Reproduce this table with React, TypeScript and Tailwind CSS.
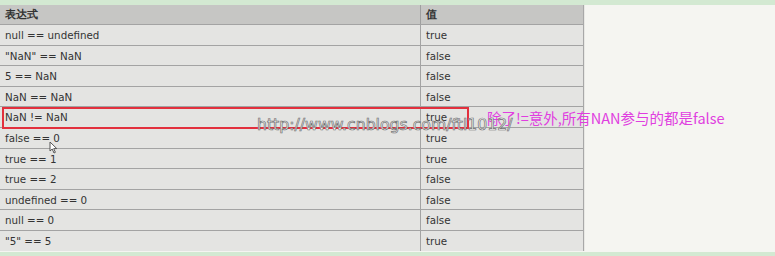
const ROWS: [string, string][] = [
  ["null == undefined", "true"],
  ['"NaN" == NaN', "false"],
  ["5 == NaN", "false"],
  ["NaN == NaN", "false"],
  ["NaN != NaN", "true"],
  ["false == 0", "true"],
  ["true == 1", "true"],
  ["true == 2", "false"],
  ["undefined == 0", "false"],
  ["null == 0", "false"],
  ['"5" == 5', "true"],
];

export default function App() {
  return (
    <div className="relative h-[256px] w-[775px] overflow-hidden bg-[#f5f5f1] font-['DejaVu_Sans',sans-serif] text-[#333]">
      <div className="h-[5px] bg-[#d3e9d2]" />
      <div className="flex">
        <div className="w-[584px] border-r border-[#a8a8a8] bg-[#e4e4e2]">
          <div className="flex h-[19px] bg-[#c6c6c4] text-[10.5px] font-bold">
            <div className="w-[421px] border-r border-[#9f9f9f] pl-[5px] leading-[19px]">表达式</div>
            <div className="flex-1 pl-[5px] leading-[19px]">值</div>
          </div>
          {ROWS.map(([expr, val]) => (
            <div key={expr} className="flex h-[20.6px] border-t border-[#a3a3a3] text-[10.3px]">
              <div className="w-[421px] border-r border-[#a3a3a3] pl-[5px] leading-[20px]">{expr}</div>
              <div className="flex-1 pl-[5px] leading-[20px]">{val}</div>
            </div>
          ))}
        </div>
        <div className="flex-1 border-l border-[#e8e8e4]" />
      </div>
      <div className="absolute bottom-0 left-0 h-[4px] w-full bg-[#d3e9d2]" />

      {/* red highlight box */}
      <div className="absolute left-[2px] top-[107px] h-[22px] w-[467px] border-2 border-[#e2303d]" />

      {/* note */}
      <div className="absolute left-[487px] top-[108px] text-[14.5px] leading-[20px] text-[#e03ee0] font-['Noto_Sans_CJK_SC',sans-serif]">
        除了!=意外,所有NAN参与的都是false
      </div>

      {/* watermark */}
      <div className="pointer-events-none absolute left-[257px] top-[115px] text-[15.7px] leading-[20px] text-white font-['DejaVu_Sans',sans-serif] [-webkit-text-stroke:0.7px_#6f6f6f]">
        http://www.cnblogs.com/ftl1012/
      </div>

      {/* cursor */}
      <svg className="absolute left-[49px] top-[141px]" width="9" height="13" viewBox="0 0 9 13">
        <path d="M1 1 L1 10 L3.2 8 L5 12 L6.4 11.3 L4.7 7.6 L7.8 7.6 Z" fill="#fff" stroke="#555" strokeWidth="1" />
      </svg>
    </div>
  );
}
